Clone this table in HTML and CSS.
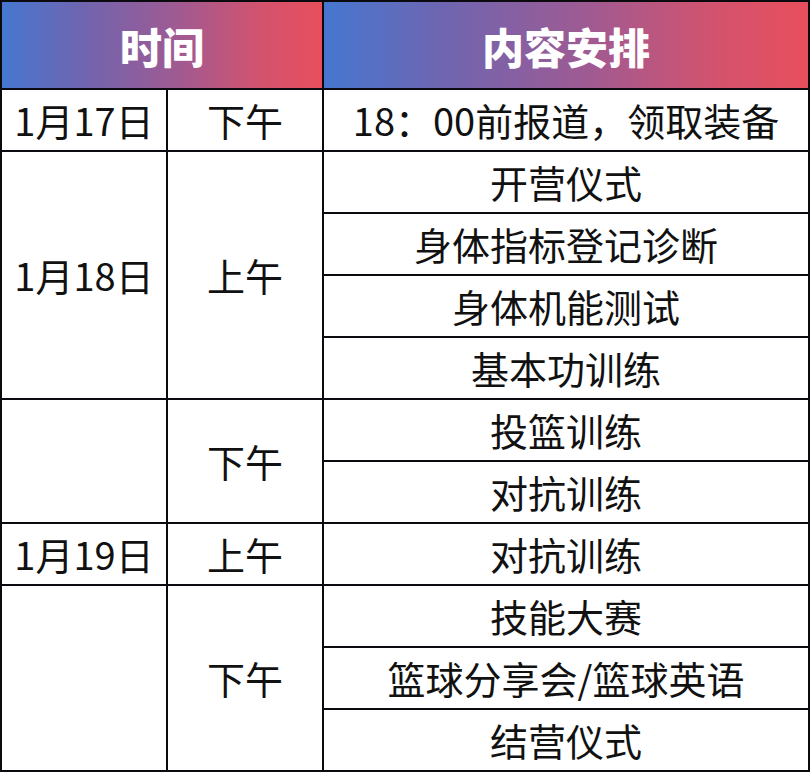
FILE: index.html
```html
<!DOCTYPE html>
<html lang="zh-CN">
<head>
<meta charset="utf-8">
<title>日程安排</title>
<link rel="stylesheet" href="styles.css">
</head>
<body>
<div class="schedule">
  <div class="head head-time">时间</div>
  <div class="head">内容安排</div>

  <div class="cell">1月17日</div>
  <div class="cell">下午</div>
  <div class="cell">18：00前报道，领取装备</div>

  <div class="cell span4">1月18日</div>
  <div class="cell span4">上午</div>
  <div class="cell">开营仪式</div>
  <div class="cell">身体指标登记诊断</div>
  <div class="cell">身体机能测试</div>
  <div class="cell">基本功训练</div>

  <div class="cell span2"></div>
  <div class="cell span2">下午</div>
  <div class="cell">投篮训练</div>
  <div class="cell">对抗训练</div>

  <div class="cell">1月19日</div>
  <div class="cell">上午</div>
  <div class="cell">对抗训练</div>

  <div class="cell span3"></div>
  <div class="cell span3">下午</div>
  <div class="cell">技能大赛</div>
  <div class="cell">篮球分享会/篮球英语</div>
  <div class="cell">结营仪式</div>
</div>
</body>
</html>
```
FILE: styles.css
```css
html, body {
  margin: 0;
  padding: 0;
  background: #ffffff;
}

.schedule {
  display: grid;
  grid-template-columns: 164px 154px 484px;
  grid-template-rows: 86px repeat(11, 60px);
  gap: 2px;
  padding: 2px;
  width: 810px;
  height: 772px;
  box-sizing: border-box;
  background: #0b0b0f;
  font-family: "Noto Sans CJK SC", "Noto Sans", sans-serif;
}

.head {
  display: flex;
  align-items: center;
  justify-content: center;
  background: linear-gradient(90deg, #4677d0 0%, #6f65b0 25%, #a05a92 55%, #d2536f 80%, #e84f5c 100%);
  color: #ffffff;
  font-size: 42px;
  font-weight: 900;
  line-height: 1;
  padding-top: 2px;
}

.head-time {
  grid-column: span 2;
}

.cell {
  display: flex;
  align-items: center;
  justify-content: center;
  background: #ffffff;
  color: #111111;
  font-size: 38px;
  line-height: 1;
  white-space: nowrap;
}

.span2 { grid-row: span 2; }
.span3 { grid-row: span 3; }
.span4 { grid-row: span 4; }
```
